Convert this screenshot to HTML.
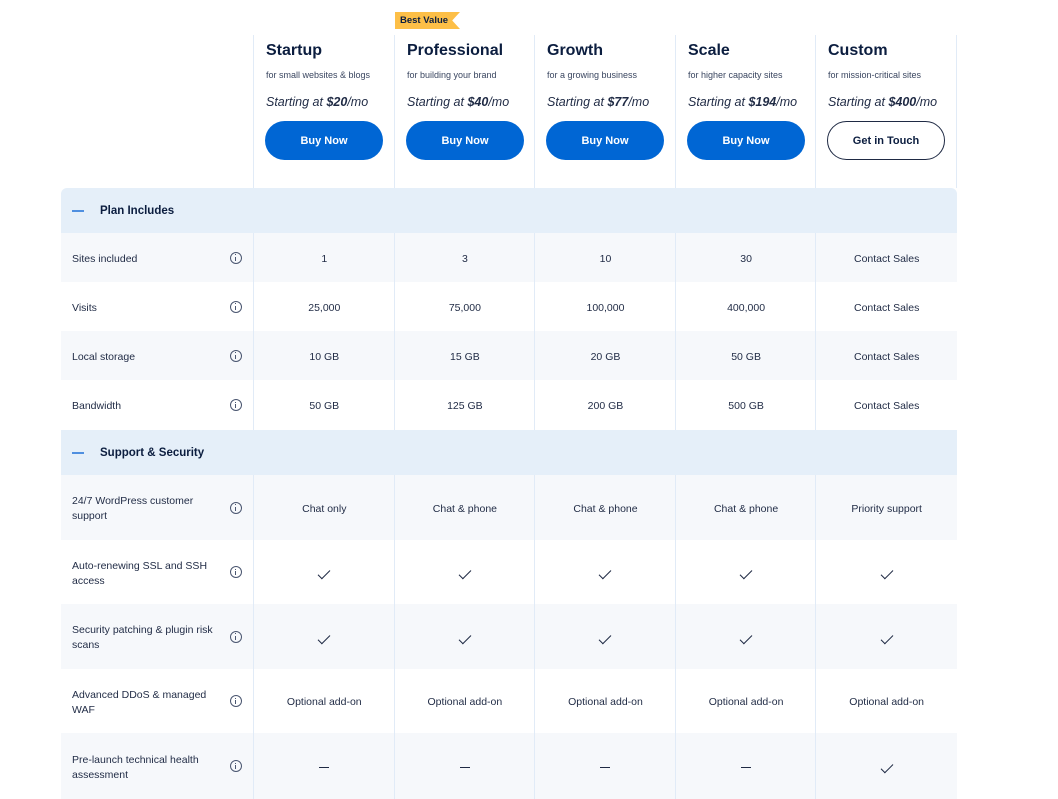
<!DOCTYPE html>
<html><head><meta charset="utf-8"><style>
*{margin:0;padding:0;box-sizing:border-box}
body{width:1058px;height:799px;background:#fff;font-family:"Liberation Sans",Arial,sans-serif;color:#1f2a44;position:relative;overflow:hidden}
.vl{position:absolute;top:35px;bottom:0;width:1px;background:#e1ebf7}
.plan{position:absolute;top:40px;width:141px;padding-left:12px}
.plan h3{font-size:16px;font-weight:bold;color:#0b1d3f;line-height:22px}
.plan .sub{font-size:9px;color:#3a4660;margin-top:7px;line-height:12px}
.plan .price{font-size:12.5px;font-style:italic;color:#1f2a44;margin-top:13px;line-height:16px}
.plan .price b{font-weight:bold}
.btn{position:absolute;top:81px;left:11px;width:118px;height:39px;border-radius:20px;background:#0066d4;color:#fff;font-size:11px;font-weight:bold;display:flex;align-items:center;justify-content:center}
.btn.o{background:#fff;border:1.3px solid #1f2a44;color:#0b1d3f}
.row{position:absolute;left:61px;width:896px;display:flex;align-items:center;font-size:10.5px;color:#1f2a44}
.row.g{background:#f6f8fb}
.row .lab{width:193px;padding-left:11px;padding-right:30px;padding-top:3px;position:relative;line-height:15px;height:100%;display:flex;align-items:center}
.row .lab .i{position:absolute;left:169px;top:50%;margin-top:-6px;width:12px;height:12px;border:1.3px solid #4a5670;border-radius:50%}
.row .lab .i:after{content:"";position:absolute;left:4px;top:4px;width:1.3px;height:4px;background:#4a5670}
.row .lab .i:before{content:"";position:absolute;left:4px;top:1.5px;width:1.4px;height:1.4px;background:#4a5670}
.row .c{width:140.6px;text-align:center;padding-top:2px}
.sec{position:absolute;left:61px;width:896px;background:#e5eff9;font-size:11.5px;font-weight:bold;color:#0b1d3f;display:flex;align-items:center;padding-left:39px}
.sec:before{content:"";position:absolute;left:11px;top:50%;margin-top:-1px;width:12px;height:2px;background:#4f8fe0}
.ck{display:inline-block;width:12px;height:6px;border-left:1.5px solid #1f2a44;border-bottom:1.5px solid #1f2a44;transform:rotate(-45deg);margin-top:-6px}
.dash{display:inline-block;width:10px;height:1px;background:#1f2a44;vertical-align:middle}
</style></head><body>
<div class="row g" style="top:233px;height:49px"></div>
<div class="row g" style="top:331px;height:49px"></div>
<div class="row g" style="top:475px;height:65px"></div>
<div class="row g" style="top:604px;height:65px"></div>
<div class="row g" style="top:733px;height:66px"></div>

<div class="vl" style="left:253px"></div>
<div class="vl" style="left:394px"></div>
<div class="vl" style="left:534px"></div>
<div class="vl" style="left:675px"></div>
<div class="vl" style="left:815px"></div>
<div class="vl" style="left:956px;top:35px;height:153px"></div>

<div style="position:absolute;left:395px;top:12px;width:65px;height:17px;background:#fdbf47;clip-path:polygon(0 0,100% 0,88% 50%,100% 100%,0 100%);font-size:9.5px;font-weight:bold;color:#0b1d3f;padding-left:5px;line-height:17px">Best Value</div>

<div class="plan" style="left:254px"><h3>Startup</h3><div class="sub">for small websites &amp; blogs</div><div class="price">Starting at <b>$20</b>/mo</div><div class="btn">Buy Now</div></div>
<div class="plan" style="left:395px"><h3>Professional</h3><div class="sub">for building your brand</div><div class="price">Starting at <b>$40</b>/mo</div><div class="btn">Buy Now</div></div>
<div class="plan" style="left:535px"><h3>Growth</h3><div class="sub">for a growing business</div><div class="price">Starting at <b>$77</b>/mo</div><div class="btn">Buy Now</div></div>
<div class="plan" style="left:676px"><h3>Scale</h3><div class="sub">for higher capacity sites</div><div class="price">Starting at <b>$194</b>/mo</div><div class="btn">Buy Now</div></div>
<div class="plan" style="left:816px"><h3>Custom</h3><div class="sub">for mission-critical sites</div><div class="price">Starting at <b>$400</b>/mo</div><div class="btn o">Get in Touch</div></div>

<div class="sec" style="top:188px;height:45px;border-radius:6px 6px 0 0">Plan Includes</div>
<div class="row" style="top:233px;height:49px"><div class="lab">Sites included<span class="i"></span></div><div class="c">1</div><div class="c">3</div><div class="c">10</div><div class="c">30</div><div class="c">Contact Sales</div></div>
<div class="row" style="top:282px;height:49px"><div class="lab">Visits<span class="i"></span></div><div class="c">25,000</div><div class="c">75,000</div><div class="c">100,000</div><div class="c">400,000</div><div class="c">Contact Sales</div></div>
<div class="row" style="top:331px;height:49px"><div class="lab">Local storage<span class="i"></span></div><div class="c">10 GB</div><div class="c">15 GB</div><div class="c">20 GB</div><div class="c">50 GB</div><div class="c">Contact Sales</div></div>
<div class="row" style="top:380px;height:50px"><div class="lab">Bandwidth<span class="i"></span></div><div class="c">50 GB</div><div class="c">125 GB</div><div class="c">200 GB</div><div class="c">500 GB</div><div class="c">Contact Sales</div></div>

<div class="sec" style="top:430px;height:45px">Support &amp; Security</div>
<div class="row" style="top:475px;height:65px"><div class="lab">24/7 WordPress customer support<span class="i"></span></div><div class="c">Chat only</div><div class="c">Chat &amp; phone</div><div class="c">Chat &amp; phone</div><div class="c">Chat &amp; phone</div><div class="c">Priority support</div></div>
<div class="row" style="top:540px;height:64px"><div class="lab">Auto-renewing SSL and SSH access<span class="i"></span></div><div class="c"><span class="ck"></span></div><div class="c"><span class="ck"></span></div><div class="c"><span class="ck"></span></div><div class="c"><span class="ck"></span></div><div class="c"><span class="ck"></span></div></div>
<div class="row" style="top:604px;height:65px"><div class="lab">Security patching &amp; plugin risk scans<span class="i"></span></div><div class="c"><span class="ck"></span></div><div class="c"><span class="ck"></span></div><div class="c"><span class="ck"></span></div><div class="c"><span class="ck"></span></div><div class="c"><span class="ck"></span></div></div>
<div class="row" style="top:669px;height:64px"><div class="lab">Advanced DDoS &amp; managed WAF<span class="i"></span></div><div class="c">Optional add-on</div><div class="c">Optional add-on</div><div class="c">Optional add-on</div><div class="c">Optional add-on</div><div class="c">Optional add-on</div></div>
<div class="row" style="top:733px;height:66px"><div class="lab">Pre-launch technical health assessment<span class="i"></span></div><div class="c"><span class="dash"></span></div><div class="c"><span class="dash"></span></div><div class="c"><span class="dash"></span></div><div class="c"><span class="dash"></span></div><div class="c"><span class="ck"></span></div></div>
</body></html>
